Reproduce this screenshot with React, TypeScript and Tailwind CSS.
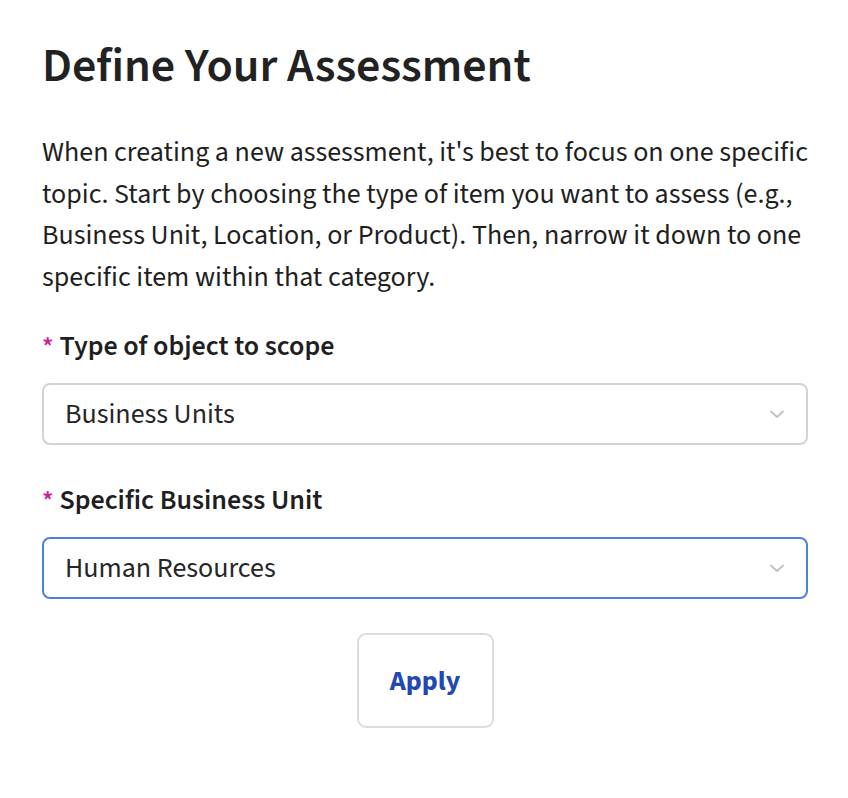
function Chevron() {
  return (
    <svg className="h-[16px] w-[16px] text-[#c2c2c2]" viewBox="0 0 16 16" fill="none" stroke="currentColor" strokeWidth="1.8" strokeLinecap="round" strokeLinejoin="round">
      <path d="M2 5.5l6 5.5 6-5.5" />
    </svg>
  )
}

type SelectFieldProps = {
  label: string
  value: string
  focused?: boolean
}

function SelectField({ label, value, focused }: SelectFieldProps) {
  return (
    <div>
      <p className="flex items-baseline text-[28px] font-semibold leading-[36px] text-[#1f1f1f]">
        <span className="mr-[6px] text-[26px] leading-none text-[#cc22a0]">*</span>
        {label}
      </p>
      <button
        className={`mt-[19px] flex h-[62px] w-full items-center justify-between rounded-[8px] border-2 bg-white pl-[21px] pr-[21px] text-left text-[28px] text-[#262626] ${
          focused ? "border-[#4f80e1]" : "border-[#d3d3d3]"
        }`}
        type="button"
      >
        <span>{value}</span>
        <Chevron />
      </button>
    </div>
  )
}

export default function App() {
  return (
    <div className="min-h-screen bg-white px-[42px] pt-[36px] font-['Source_Sans_3','Source_Sans_Pro','Lato',sans-serif] text-[#1f1f1f]">
      <div className="w-[766px]">
        <h1 className="text-[48px] font-semibold leading-[60px] text-[#222222]">Define Your Assessment</h1>
        <p className="mt-[36px] text-[28px] leading-[41.5px] text-[#1f1f1f]">
          When creating a new assessment, it's best to focus on one specific topic. Start by choosing the type of item
          you want to assess (e.g., Business Unit, Location, or Product). Then, narrow it down to one specific item
          within that category.
        </p>
        <div className="mt-[30px] flex flex-col gap-[37px]">
          <SelectField label="Type of object to scope" value="Business Units" />
          <SelectField label="Specific Business Unit" value="Human Resources" focused />
        </div>
        <div className="mt-[34px] flex justify-center">
          <button
            className="h-[95px] w-[137px] rounded-[9px] border-2 border-[#dadde0] bg-white text-[28px] font-bold text-[#2448b3]"
            type="button"
          >
            Apply
          </button>
        </div>
      </div>
    </div>
  )
}
